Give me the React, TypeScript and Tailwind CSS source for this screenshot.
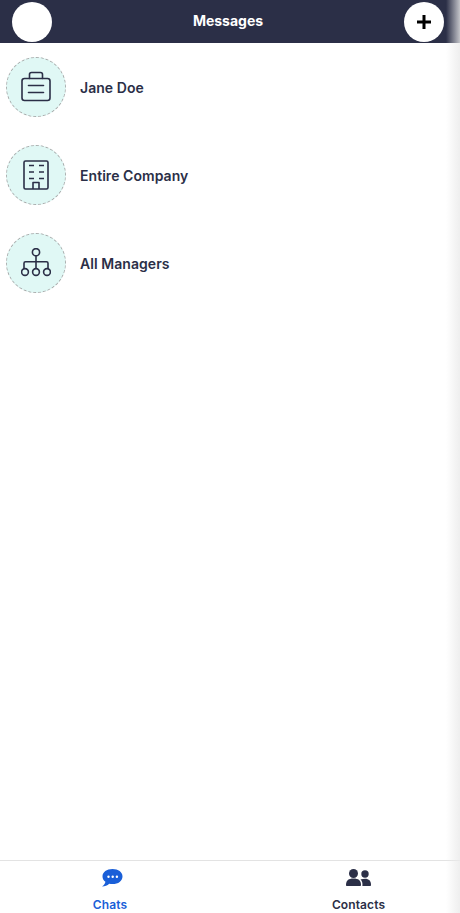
type ChatRowProps = {
  icon: React.JSX.Element,
  title: string
}

const stroke = "#2b2f47"

const BriefcaseIcon = (
  <svg width="32" height="32" viewBox="0 0 32 32" fill="none" stroke={stroke} strokeWidth="1.6" strokeLinecap="round" strokeLinejoin="round">
    <rect x="2" y="7.5" width="28" height="22" rx="2.5" />
    <path d="M9.5 7.5V3.5a2 2 0 0 1 2-2h9a2 2 0 0 1 2 2v4" />
    <path d="M8.5 14.5h15M8.5 21.5h15" />
  </svg>
)

const BuildingIcon = (
  <svg width="26" height="30" viewBox="0 0 26 30" fill="none" stroke={stroke} strokeWidth="1.6" strokeLinejoin="round">
    <rect x="1" y="1" width="24" height="28" rx="1.5" />
    <path d="M6 5.500h5M16 5.500h5M6 12h5M16 12h5M6 18.500h5M16 18.500h5" />
    <path d="M10 29v-6.500h6V29" />
  </svg>
)

const OrgIcon = (
  <svg width="30" height="30" viewBox="0 0 30 30" fill="none" stroke={stroke} strokeWidth="1.6">
    <circle cx="15" cy="4.200" r="3.600" />
    <path d="M15 7.800V20.700M15 13.700H4.500a1.500 1.500 0 0 0-1.500 1.500V20.700M15 13.700h10.500a1.500 1.500 0 0 1 1.500 1.500V20.700" />
    <circle cx="4" cy="24" r="3.400" />
    <circle cx="15" cy="24" r="3.400" />
    <circle cx="26" cy="24" r="3.400" />
  </svg>
)

function ChatRow({ icon, title }: ChatRowProps) {
  return (
    <div className="flex items-center h-[88px] pl-[6px]">
      <div className="w-[60px] h-[60px] rounded-full bg-[#e0f8f5] border border-dashed border-[#a8adad] flex items-center justify-center">
        {icon}
      </div>
      <span className="ml-[14px] pt-[2px] text-[14px] font-semibold tracking-[0.05px] text-[#2b2f47] leading-none">{title}</span>
    </div>
  )
}

export default function App() {
  return (
    <div className="relative w-[460px] h-[913px] bg-white flex flex-col overflow-hidden [font-family:Inter,sans-serif]">
      <header className="h-[43px] bg-[#2b2f47] flex items-center justify-between pl-[12px] pr-[16px] shrink-0">
        <div className="w-[40px] h-[40px] rounded-full bg-white" />
        <h1 className="mb-[2px] text-[14px] font-bold text-white">Messages</h1>
        <button className="w-[40px] h-[40px] rounded-full bg-white flex items-center justify-center">
          <svg width="14" height="14" viewBox="0 0 14 14" stroke="#000" strokeWidth="3">
            <path d="M7 0v14M0 7h14" />
          </svg>
        </button>
      </header>
      <main className="flex-1">
        <ChatRow icon={BriefcaseIcon} title="Jane Doe" />
        <ChatRow icon={BuildingIcon} title="Entire Company" />
        <ChatRow icon={OrgIcon} title="All Managers" />
      </main>
      <nav className="h-[53px] border-t border-[#e3e3e3] flex shrink-0">
        <div className="w-[224px] flex flex-col items-center pt-[8px]">
          <svg width="22" height="18" viewBox="0 0 22 18">
            <path fill="#1a5fd8" d="M11.500 0C5.700 0 1.500 3.200 1.500 7.400c0 2.200 1.100 4 2.900 5.300-.2 1.800-1.400 3.400-3.400 4.800 2.900 0 5.400-1 7.200-2.800 1 .3 2.100.4 3.300.4 5.800 0 10-3.400 10-7.700S17.300 0 11.500 0z" />
            <circle cx="7.500" cy="7.800" r="1.200" fill="#fff" />
            <circle cx="11.700" cy="7.800" r="1.200" fill="#fff" />
            <circle cx="15.900" cy="7.800" r="1.200" fill="#fff" />
          </svg>
          <span className="mt-[12px] mr-[4px] text-[12px] font-semibold tracking-[0.1px] leading-none text-[#1a5fd8]">Chats</span>
        </div>
        <div className="ml-[33px] w-[203px] flex flex-col items-center pt-[8px]">
          <svg width="25" height="18" viewBox="0 0 25 18" fill="#2b2f47">
            <circle cx="7.500" cy="4.500" r="4.500" />
            <path d="M0 16c0-4.500 2.500-6.500 7.500-6.500S15 11.500 15 16c0 .6-.4 1-1 1H1c-.6 0-1-.4-1-1z" />
            <circle cx="19" cy="5" r="3.700" />
            <path d="M15.500 10.300c1-.4 2.100-.6 3.500-.6 4 0 6 2.200 6 6.300 0 .6-.4 1-1 1h-7.600c.3-2.600-.2-5-1.900-6.700z" />
          </svg>
          <span className="mt-[12px] text-[12px] font-semibold tracking-[0.1px] leading-none text-[#2b2f47]">Contacts</span>
        </div>
      </nav>
      <div className="absolute top-0 right-0 w-[14px] h-full bg-gradient-to-r from-[#eaeaea00] to-[#eaeaeacc]" />
    </div>
  )
}
